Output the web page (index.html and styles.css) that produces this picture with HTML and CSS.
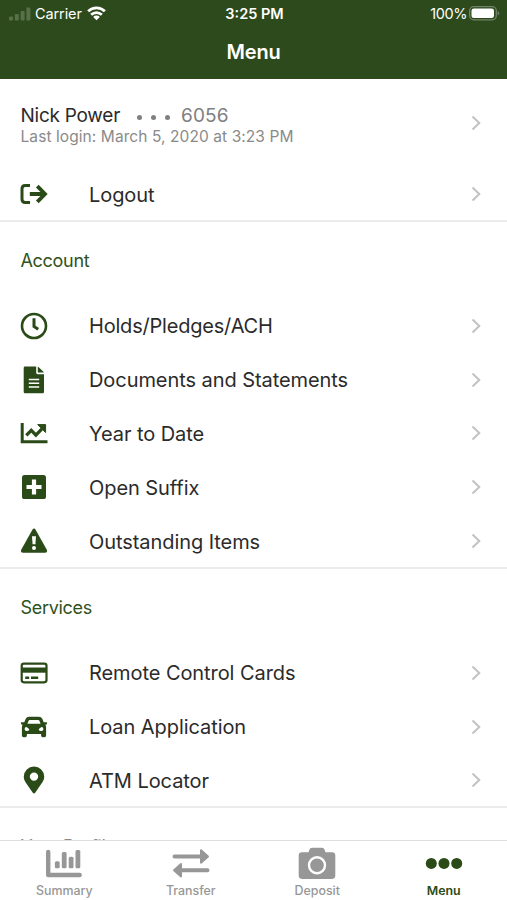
FILE: index.html
```html
<!DOCTYPE html>
<html lang="en">
<head>
<meta charset="utf-8">
<title>Menu</title>
<link rel="stylesheet" href="styles.css">
</head>
<body>
<svg class="defs" aria-hidden="true">
  <symbol id="chevron" viewBox="0 0 10 16"><path d="M1.5 1.5 8.3 8 1.5 14.5" fill="none" stroke="currentColor" stroke-width="2"/></symbol>
</svg>
<div class="app">
  <header class="header">
    <div class="status">
      <div class="status-left">
        <svg class="signal" viewBox="0 0 22 14" fill="currentColor"><rect x="0" y="9.5" width="4" height="4" rx="1"/><rect x="5.8" y="7" width="4" height="6.5" rx="1"/><rect x="11.6" y="4" width="4" height="9.5" rx="1"/><rect x="17.4" y="0.5" width="4" height="13" rx="1"/></svg>
        <span class="carrier">Carrier</span>
        <svg class="wifi" viewBox="0 0 20 15" fill="none" stroke="#fff" stroke-width="2.9"><path d="M1.2 5.2a12.6 12.6 0 0 1 17.6 0M4.4 8.8a8 8 0 0 1 11.2 0"/><path d="M10 14.6 6.500 11.200a4.800 4.800 0 0 1 7 0z" fill="#fff" stroke="none"/></svg>
      </div>
      <span class="time">3:25 PM</span>
      <div class="status-right">
        <span class="percent">100%</span>
        <svg class="battery" viewBox="0 0 31 15"><rect x=".7" y=".7" width="26.6" height="13.1" rx="4" fill="none" stroke="#71836a" stroke-width="1.3"/><rect x="2.5" y="2.5" width="22.500" height="9.5" rx="2.3" fill="#fff"/><path d="M28.7 5v4.6q1.6-.8 1.6-2.3T28.7 5z" fill="#71836a"/></svg>
      </div>
    </div>
    <h1 class="title">Menu</h1>
  </header>
  <main class="content">
    <section class="section">
      <div class="user">
        <div class="user-info">
          <div class="user-line"><span class="name">Nick Power</span><span class="dots"><i></i><i></i><i></i></span><span class="number">6056</span></div>
          <div class="last-login">Last login: March 5, 2020 at 3:23 PM</div>
        </div>
        <svg class="chevron"><use href="#chevron"/></svg>
      </div>
      <div class="row">
        <svg class="icon" viewBox="0 0 28 28"><path d="M10 5.600H5.200Q2 5.600 2 8.800v10.400q0 3.200 3.200 3.200H10" fill="none" stroke="currentColor" stroke-width="3"/><path d="M9.800 14h15M17.300 6.200 25 14l-7.700 7.800" fill="none" stroke="currentColor" stroke-width="3.800"/></svg>
        <span class="label">Logout</span><svg class="chevron"><use href="#chevron"/></svg>
      </div>
    </section>
    <section class="section">
      <h2 class="heading">Account</h2>
      <div class="row">
        <svg class="icon" viewBox="0 0 28 28"><circle cx="14" cy="14" r="12" fill="none" stroke="currentColor" stroke-width="2.600"/><path d="M14 6.200v8.300l4.200 2.800" fill="none" stroke="currentColor" stroke-width="3"/></svg>
        <span class="label tight">Holds/Pledges/ACH</span><svg class="chevron"><use href="#chevron"/></svg>
      </div>
      <div class="row">
        <svg class="icon" viewBox="0 0 28 28" fill="currentColor"><path d="M5 .6h11.200v6.200q0 1.400 1.400 1.400H24v17.700q0 1.300-1.300 1.300H5q-1.300 0-1.300-1.300V1.900Q3.700.6 5 .6z"/><path d="M17.800.8q.7.100 1.200.6l4.200 4.100q.5.500.6 1.100h-6z"/><path d="M8.800 13.600h10.400M8.800 17.300h10.400M8.800 21h10.400" stroke="#fff" stroke-width="1.500"/></svg>
        <span class="label">Documents and Statements</span><svg class="chevron"><use href="#chevron"/></svg>
      </div>
      <div class="row">
        <svg class="icon" viewBox="0 0 28 28"><path d="M2.200 4v18.700H27.500" fill="none" stroke="currentColor" stroke-width="3"/><path d="m6.300 16.400 5-5.100 4.600 4.800 6-6.200" fill="none" stroke="currentColor" stroke-width="3.300"/><path d="M17.700 5.600h7.900v7.900z" fill="currentColor" stroke="currentColor"/></svg>
        <span class="label">Year to Date</span><svg class="chevron"><use href="#chevron"/></svg>
      </div>
      <div class="row">
        <svg class="icon" viewBox="0 0 28 28"><rect x="2" y="2" width="24" height="24" rx="2.600" fill="currentColor"/><path d="M14 6.500v15M6.500 14h15" stroke="#fff" stroke-width="4.200"/></svg>
        <span class="label">Open Suffix</span><svg class="chevron"><use href="#chevron"/></svg>
      </div>
      <div class="row">
        <svg class="icon" viewBox="0 0 28 28"><path d="M12.400 2.700q1.600-2.300 3.200 0l11.200 20q1.100 2.800-1.600 3.100H2.800Q.1 25.500 1.200 22.700z" fill="currentColor"/><path d="M12 9.300h4l-.6 8h-2.800z" fill="#fff"/><circle cx="14" cy="21" r="2" fill="#fff"/></svg>
        <span class="label">Outstanding Items</span><svg class="chevron"><use href="#chevron"/></svg>
      </div>
    </section>
    <section class="section">
      <h2 class="heading">Services</h2>
      <div class="row">
        <svg class="icon" viewBox="0 0 28 28"><rect x="1.700" y="4.700" width="24.800" height="18.600" rx="2.200" fill="none" stroke="currentColor" stroke-width="2.200"/><path d="M1.500 8.500h25v5.200h-25z" fill="currentColor"/><path d="M5.200 18.800h4M11 18.800h7.200" stroke="currentColor" stroke-width="2.600"/></svg>
        <span class="label">Remote Control Cards</span><svg class="chevron"><use href="#chevron"/></svg>
      </div>
      <div class="row">
        <svg class="icon" viewBox="0 0 28 28"><path fill="currentColor" fill-rule="evenodd" d="M9.200 3.700h9.600q2.600 0 3.600 2.400l1.300 3.200h2.800q.8 0 .6.800l-.3 1q-.2.700-1 .7h-.6q.9 1 .9 2.400v8.200q0 1.800-1.700 1.800h-1.600q-1.700 0-1.700-1.800v-1.500H6.900v1.500q0 1.800-1.700 1.800H3.600q-1.700 0-1.700-1.800v-8.200q0-1.400.9-2.400h-.6q-.8 0-1-.7l-.3-1q-.2-.8.6-.8h2.800l1.300-3.200Q6.600 3.700 9.200 3.700zM9.700 7q-.8 0-1.100.8l-1.200 3h13.200l-1.200-3Q19.100 7 18.300 7zM6.500 14.100a1.900 1.900 0 1 0 0 3.800q2.800.2 2.800-1.100 0-1.300-2.800-2.700zM21.500 14.100a1.900 1.900 0 1 1 0 3.800q-2.800.2-2.800-1.100 0-1.300 2.800-2.700z"/></svg>
        <span class="label">Loan Application</span><svg class="chevron"><use href="#chevron"/></svg>
      </div>
      <div class="row">
        <svg class="icon" viewBox="0 0 28 28"><path fill="currentColor" fill-rule="evenodd" d="M14 .4A10.200 10.200 0 0 0 3.800 10.600c0 4 1.400 5.200 9 16.200q1.200 1.400 2.400 0c7.600-11 9-12.200 9-16.200A10.200 10.200 0 0 0 14 .4zM14 6.400a4.200 4.200 0 1 1 0 8.400 4.200 4.200 0 0 1 0-8.400z"/></svg>
        <span class="label">ATM Locator</span><svg class="chevron"><use href="#chevron"/></svg>
      </div>
    </section>
    <section class="section">
      <h2 class="heading muted">Your Profile</h2>
    </section>
  </main>
  <nav class="tabs">
    <a class="tab"><svg class="tab-icon" viewBox="0 0 38 34"><path d="M3.200 4v23h31.500" fill="none" stroke="currentColor" stroke-width="4.400" stroke-linecap="round" stroke-linejoin="round"/><g fill="currentColor"><rect x="9.900" y="13.300" width="4.800" height="6.900" rx="1.500"/><rect x="16.800" y="4" width="4.800" height="16.200" rx="1.500"/><rect x="23.700" y="8.700" width="4.800" height="11.500" rx="1.500"/><rect x="30.500" y="2" width="4.800" height="18.200" rx="1.500"/></g></svg><span>Summary</span></a>
    <a class="tab"><svg class="tab-icon" viewBox="0 0 38 34"><path d="M2.500 8.500H30M8 22.200h27.500" stroke="currentColor" stroke-width="4" stroke-linecap="round"/><path d="M29 2.200 36 8.500l-7 6.200zM9 16 2 22.200l7 6.200z" fill="currentColor" stroke="currentColor" stroke-width="2" stroke-linejoin="round"/></svg><span>Transfer</span></a>
    <a class="tab"><svg class="tab-icon" viewBox="0 0 38 34"><path d="M10.500 4.300 11.600 1.300Q12.200-.3 14-.3h10q1.800 0 2.400 1.600l1.100 3H34q3.300 0 3.300 3.300v20q0 3.300-3.300 3.300H4Q.7 30.900.7 27.600v-20Q.7 4.300 4 4.300z" fill="currentColor"/><circle cx="19" cy="17.300" r="8" fill="none" stroke="#fff" stroke-width="2.400"/></svg><span>Deposit</span></a>
    <a class="tab active"><svg class="tab-icon" viewBox="0 0 38 34" fill="currentColor"><circle cx="6.300" cy="15.400" r="5.500"/><circle cx="19" cy="15.400" r="5.500"/><circle cx="31.700" cy="15.400" r="5.500"/></svg><span>Menu</span></a>
  </nav>
</div>
</body>
</html>
```
FILE: styles.css
```css
* { box-sizing: border-box; }
body { margin: 0; font-family: Inter, "Liberation Sans", sans-serif; background: #fff; color: #2b2b2b; }
.defs { display: block; width: 0; height: 0; }
.app { display: flex; flex-direction: column; height: 900px; overflow: hidden; }
.header { flex: none; height: 79px; background: #2d4a1c; color: #fff; }
.status { display: grid; grid-template-columns: 1fr auto 1fr; align-items: center; height: 27px; padding: 0 7px 0 9px; font-size: 14.500px; }
.status-left, .status-right { display: flex; align-items: center; }
.status-right { justify-content: flex-end; gap: 2px; }
.signal { width: 22px; height: 14px; color: #577047; }
.carrier { margin: 0 5px 0 4px; letter-spacing: -0.100px; }
.percent { letter-spacing: -0.400px; }
.wifi { width: 19px; height: 15px; }
.time { font-weight: 600; }
.battery { width: 31px; height: 15px; }
.title { margin: 0; height: 50px; line-height: 51px; font-size: 20px; font-weight: 600; letter-spacing: -0.200px; text-align: center; }
.content { flex: 1; min-height: 0; overflow: hidden; }
.section { border-bottom: 2px solid #ebebeb; }
.row { display: flex; align-items: center; height: 53.800px; padding: 0 26.500px 0 20px; }
.section .row:last-child { margin-bottom: -1px; }
.icon { flex: none; width: 28px; height: 28px; margin-right: 41px; color: #2a4b17; overflow: visible; }
.label { flex: 1; padding-top: 1px; font-size: 20px; letter-spacing: -0.070px; }
.label.tight { letter-spacing: -0.200px; }
.chevron { flex: none; width: 10px; height: 16px; color: #c2c2c5; }
.user { display: flex; align-items: center; height: 88.200px; padding: 0 26.500px 0 20.500px; }
.user-info { flex: 1; padding-top: 4px; }
.user-line { display: flex; align-items: center; height: 23px; font-size: 19px; letter-spacing: -0.250px; }
.dots { display: flex; gap: 9px; margin: 3px 11px 0 17px; }
.dots i { width: 5px; height: 5px; border-radius: 50%; background: #808080; }
.number { color: #808080; letter-spacing: 0.100px; }
.last-login { height: 19px; line-height: 19px; font-size: 15.500px; letter-spacing: 0.080px; color: #8a8a8a; }
.heading { margin: 0; height: 77px; line-height: 77px; padding-left: 20.500px; font-size: 18px; font-weight: 400; letter-spacing: -0.300px; color: #2f5220; }
.muted { color: #8a8a8a; }
.tabs { flex: none; display: grid; grid-template-columns: repeat(4, 1fr); height: 60px; padding: 7px 0 0 1px; border-top: 1px solid #dedede; background: #fff; }
.tab { display: flex; flex-direction: column; align-items: center; color: #979797; font-size: 12.400px; font-weight: 500; line-height: 16px; }
.tab-icon { width: 38px; height: 34px; margin-bottom: 1px; overflow: visible; }
.active { color: #2a4b17; font-weight: 600; }
```
